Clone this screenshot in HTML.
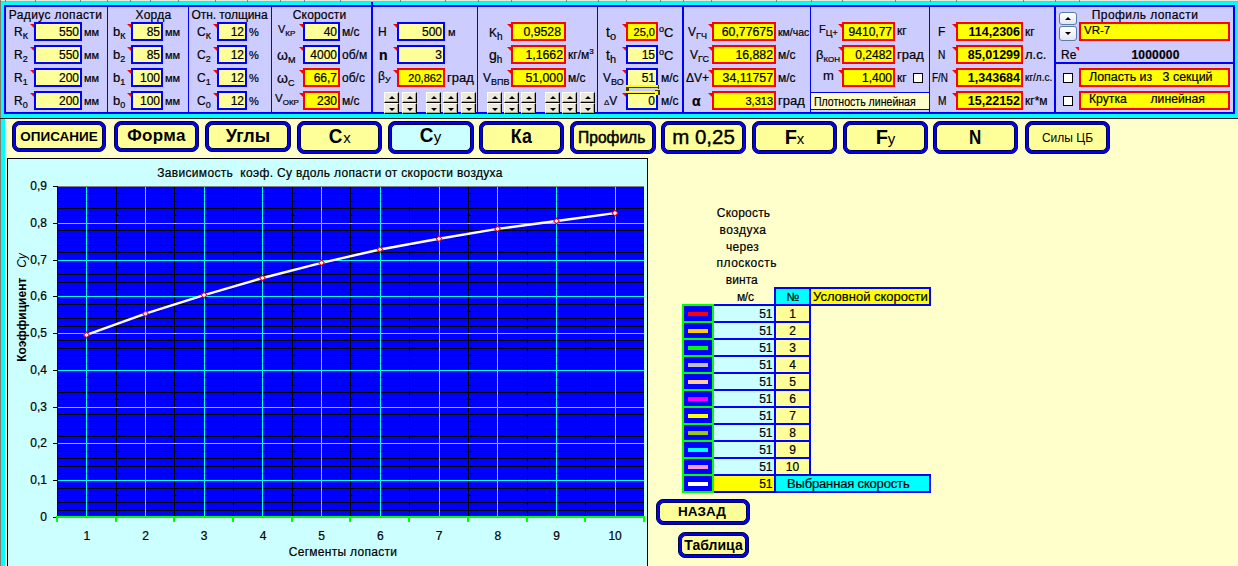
<!DOCTYPE html><html lang="ru"><head><meta charset="utf-8"><title>Cy</title><style>
html,body{margin:0;padding:0;}
body{width:1238px;height:566px;overflow:hidden;background:#FFFFCC;font-family:"Liberation Sans",Arial,sans-serif;font-size:12px;color:#000;position:relative;-webkit-text-stroke:0.2px #000;}
.a{position:absolute;white-space:nowrap;}
svg text{stroke:#000;stroke-width:0.2px;}
svg text.nb{stroke:none;}
.bx{position:absolute;box-sizing:border-box;border:2px solid #0000FF;background:#FFFF99;text-align:right;white-space:nowrap;overflow:hidden;}
.bx.r{border-color:#FF0000;background:#FFFF00;}
.t{position:absolute;white-space:nowrap;line-height:14px;height:14px;}
.tri{position:absolute;width:0;height:0;border-top:4px solid #FF0000;border-left:4px solid transparent;}
sub{font-size:9px;vertical-align:baseline;position:relative;top:3px;line-height:0;}
sup{font-size:8px;vertical-align:baseline;position:relative;top:-5px;line-height:0;}
.sp{position:absolute;box-sizing:border-box;width:15px;height:11px;background:#ECE9D8;border:1px solid;border-color:#FFFFFF #000 #000 #FFFFFF;box-shadow:inset -1px -1px 0 #ACA899;}
.sp i{position:absolute;left:4px;top:3px;width:6px;height:3px;background:#000;}
.sp.d i{top:4px;}
.sp.u i{clip-path:polygon(50% 0,100% 100%,0 100%);}
.sp.d i{clip-path:polygon(0 0,100% 0,50% 100%);}
.cb{position:absolute;box-sizing:border-box;width:10px;height:10px;background:#fff;border:1px solid #000;}
.btn{position:absolute;box-sizing:border-box;border:1px solid #00003C;border-radius:7px;background:#0000F0;}
.btn b{-webkit-text-stroke:0;position:absolute;left:2px;top:2px;right:2px;bottom:2px;border:1px solid #000050;border-radius:5px;background:#FFFF99;display:block;text-align:center;font-weight:bold;white-space:nowrap;overflow:hidden;}
</style></head><body>
<div class="a" style="left:0px;top:0px;width:1238px;height:2px;background:#ECE9D8;"></div>
<div class="a" style="left:0px;top:1px;width:1238px;height:1px;background:#B0A890;"></div>
<div class="a" style="left:5px;top:0px;width:1px;height:2px;background:#808080;"></div>
<div class="a" style="left:35px;top:0px;width:1px;height:2px;background:#808080;"></div>
<div class="a" style="left:80px;top:0px;width:1px;height:2px;background:#808080;"></div>
<div class="a" style="left:107px;top:0px;width:1px;height:2px;background:#808080;"></div>
<div class="a" style="left:130px;top:0px;width:1px;height:2px;background:#808080;"></div>
<div class="a" style="left:150px;top:0px;width:1px;height:2px;background:#808080;"></div>
<div class="a" style="left:178px;top:0px;width:1px;height:2px;background:#808080;"></div>
<div class="a" style="left:215px;top:0px;width:1px;height:2px;background:#808080;"></div>
<div class="a" style="left:247px;top:0px;width:1px;height:2px;background:#808080;"></div>
<div class="a" style="left:280px;top:0px;width:1px;height:2px;background:#808080;"></div>
<div class="a" style="left:304px;top:0px;width:1px;height:2px;background:#808080;"></div>
<div class="a" style="left:340px;top:0px;width:1px;height:2px;background:#808080;"></div>
<div class="a" style="left:400px;top:0px;width:1px;height:2px;background:#808080;"></div>
<div class="a" style="left:445px;top:0px;width:1px;height:2px;background:#808080;"></div>
<div class="a" style="left:478px;top:0px;width:1px;height:2px;background:#808080;"></div>
<div class="a" style="left:511px;top:0px;width:1px;height:2px;background:#808080;"></div>
<div class="a" style="left:566px;top:0px;width:1px;height:2px;background:#808080;"></div>
<div class="a" style="left:598px;top:0px;width:1px;height:2px;background:#808080;"></div>
<div class="a" style="left:626px;top:0px;width:1px;height:2px;background:#808080;"></div>
<div class="a" style="left:660px;top:0px;width:1px;height:2px;background:#808080;"></div>
<div class="a" style="left:683px;top:0px;width:1px;height:2px;background:#808080;"></div>
<div class="a" style="left:711px;top:0px;width:1px;height:2px;background:#808080;"></div>
<div class="a" style="left:776px;top:0px;width:1px;height:2px;background:#808080;"></div>
<div class="a" style="left:811px;top:0px;width:1px;height:2px;background:#808080;"></div>
<div class="a" style="left:842px;top:0px;width:1px;height:2px;background:#808080;"></div>
<div class="a" style="left:895px;top:0px;width:1px;height:2px;background:#808080;"></div>
<div class="a" style="left:930px;top:0px;width:1px;height:2px;background:#808080;"></div>
<div class="a" style="left:956px;top:0px;width:1px;height:2px;background:#808080;"></div>
<div class="a" style="left:1023px;top:0px;width:1px;height:2px;background:#808080;"></div>
<div class="a" style="left:1055px;top:0px;width:1px;height:2px;background:#808080;"></div>
<div class="a" style="left:1079px;top:0px;width:1px;height:2px;background:#808080;"></div>
<div class="a" style="left:0px;top:2px;width:1238px;height:116px;background:#00FFFF;"></div>
<div class="a" style="left:0px;top:0px;width:1px;height:566px;background:#808070;"></div>
<div class="a" style="left:1px;top:118px;width:4px;height:448px;background:#00FFFF;"></div>
<div class="a" style="left:0px;top:118px;width:1238px;height:1px;background:#202020;"></div>
<div class="a" style="left:4px;top:5px;width:1231px;height:109px;background:#0000FF;"></div>
<div class="a" style="left:6px;top:7px;width:1227px;height:105px;background:#CCCCFF;"></div>
<div class="a" style="left:107px;top:7px;width:1px;height:105px;background:#0000FF;"></div>
<div class="a" style="left:188px;top:7px;width:1px;height:105px;background:#0000FF;"></div>
<div class="a" style="left:271px;top:7px;width:1px;height:105px;background:#0000FF;"></div>
<div class="a" style="left:477px;top:7px;width:1px;height:105px;background:#0000FF;"></div>
<div class="a" style="left:597px;top:7px;width:1px;height:105px;background:#0000FF;"></div>
<div class="a" style="left:810px;top:7px;width:1px;height:105px;background:#0000FF;"></div>
<div class="a" style="left:929px;top:7px;width:1px;height:105px;background:#0000FF;"></div>
<div class="a" style="left:371px;top:2px;width:2px;height:110px;background:#0000FF;"></div>
<div class="a" style="left:682px;top:7px;width:2px;height:105px;background:#0000FF;"></div>
<div class="a" style="left:1054px;top:7px;width:2px;height:105px;background:#0000FF;"></div>
<div class="a" style="left:1056px;top:62px;width:177px;height:2px;background:#0000FF;"></div>
<div class="t" style="left:8.8px;top:8px;font-size:12px;letter-spacing:0.367px;">Радиус лопасти</div>
<div class="t" style="left:14px;top:25px;font-size:12px;">R<sub>К</sub></div>
<div class="bx" style="left:34px;top:22px;width:48px;height:19px;line-height:16px;font-size:12px;padding-right:1px;">550</div>
<div class="tri" style="left:30px;top:24px;"></div>
<div class="t" style="left:84px;top:25px;font-size:11px;">мм</div>
<div class="t" style="left:14px;top:48px;font-size:12px;">R<sub>2</sub></div>
<div class="bx" style="left:34px;top:45px;width:48px;height:19px;line-height:16px;font-size:12px;padding-right:1px;">550</div>
<div class="tri" style="left:30px;top:47px;"></div>
<div class="t" style="left:84px;top:48px;font-size:11px;">мм</div>
<div class="t" style="left:14px;top:71px;font-size:12px;">R<sub>1</sub></div>
<div class="bx" style="left:34px;top:68px;width:48px;height:19px;line-height:16px;font-size:12px;padding-right:1px;">200</div>
<div class="tri" style="left:30px;top:70px;"></div>
<div class="t" style="left:84px;top:71px;font-size:11px;">мм</div>
<div class="t" style="left:14px;top:94px;font-size:12px;">R<sub>0</sub></div>
<div class="bx" style="left:34px;top:91px;width:48px;height:19px;line-height:16px;font-size:12px;padding-right:1px;">200</div>
<div class="tri" style="left:30px;top:93px;"></div>
<div class="t" style="left:84px;top:94px;font-size:11px;">мм</div>
<div class="t" style="left:135.5px;top:8px;font-size:12px;letter-spacing:0.276px;">Хорда</div>
<div class="t" style="left:113px;top:25px;font-size:13px;">b<sub>К</sub></div>
<div class="bx" style="left:131px;top:22px;width:32px;height:19px;line-height:16px;font-size:12px;padding-right:1px;">85</div>
<div class="tri" style="left:127px;top:24px;"></div>
<div class="t" style="left:165px;top:25px;font-size:11px;">мм</div>
<div class="t" style="left:113px;top:48px;font-size:13px;">b<sub>2</sub></div>
<div class="bx" style="left:131px;top:45px;width:32px;height:19px;line-height:16px;font-size:12px;padding-right:1px;">85</div>
<div class="tri" style="left:127px;top:47px;"></div>
<div class="t" style="left:165px;top:48px;font-size:11px;">мм</div>
<div class="t" style="left:113px;top:71px;font-size:13px;">b<sub>1</sub></div>
<div class="bx" style="left:131px;top:68px;width:32px;height:19px;line-height:16px;font-size:12px;padding-right:1px;">100</div>
<div class="tri" style="left:127px;top:70px;"></div>
<div class="t" style="left:165px;top:71px;font-size:11px;">мм</div>
<div class="t" style="left:113px;top:94px;font-size:13px;">b<sub>0</sub></div>
<div class="bx" style="left:131px;top:91px;width:32px;height:19px;line-height:16px;font-size:12px;padding-right:1px;">100</div>
<div class="tri" style="left:127px;top:93px;"></div>
<div class="t" style="left:165px;top:94px;font-size:11px;">мм</div>
<div class="t" style="left:191.5px;top:8px;font-size:12px;letter-spacing:-0.065px;">Отн. толщина</div>
<div class="t" style="left:197px;top:25px;font-size:12px;">C<sub>К</sub></div>
<div class="bx" style="left:217px;top:22px;width:30px;height:19px;line-height:16px;font-size:12px;padding-right:1px;">12</div>
<div class="tri" style="left:213px;top:24px;"></div>
<div class="t" style="left:249px;top:25px;font-size:11px;">%</div>
<div class="t" style="left:197px;top:48px;font-size:12px;">C<sub>2</sub></div>
<div class="bx" style="left:217px;top:45px;width:30px;height:19px;line-height:16px;font-size:12px;padding-right:1px;">12</div>
<div class="tri" style="left:213px;top:47px;"></div>
<div class="t" style="left:249px;top:48px;font-size:11px;">%</div>
<div class="t" style="left:197px;top:71px;font-size:12px;">C<sub>1</sub></div>
<div class="bx" style="left:217px;top:68px;width:30px;height:19px;line-height:16px;font-size:12px;padding-right:1px;">12</div>
<div class="tri" style="left:213px;top:70px;"></div>
<div class="t" style="left:249px;top:71px;font-size:11px;">%</div>
<div class="t" style="left:197px;top:94px;font-size:12px;">C<sub>0</sub></div>
<div class="bx" style="left:217px;top:91px;width:30px;height:19px;line-height:16px;font-size:12px;padding-right:1px;">12</div>
<div class="tri" style="left:213px;top:93px;"></div>
<div class="t" style="left:249px;top:94px;font-size:11px;">%</div>
<div class="t" style="left:292.8px;top:8px;font-size:12px;letter-spacing:0.153px;">Скорости</div>
<div class="t" style="left:278px;top:22px;font-size:11px;">V<sub style="font-size:8px">КР</sub></div>
<div class="t" style="left:277px;top:48px;font-size:14px;">ω<sub>М</sub></div>
<div class="t" style="left:277px;top:71px;font-size:14px;">ω<sub>С</sub></div>
<div class="t" style="left:275px;top:91px;font-size:11.5px;">V<sub style="font-size:8px">ОКР</sub></div>
<div class="bx" style="left:303px;top:22px;width:37px;height:19px;line-height:16px;font-size:12px;padding-right:1px;">40</div>
<div class="tri" style="left:299px;top:24px;"></div>
<div class="bx" style="left:303px;top:45px;width:37px;height:19px;line-height:16px;font-size:12px;padding-right:1px;">4000</div>
<div class="tri" style="left:299px;top:47px;"></div>
<div class="bx r" style="left:303px;top:68px;width:37px;height:19px;line-height:16px;font-size:12px;padding-right:1px;">66,7</div>
<div class="tri" style="left:299px;top:70px;"></div>
<div class="bx r" style="left:303px;top:91px;width:37px;height:19px;line-height:16px;font-size:12px;padding-right:1px;">230</div>
<div class="tri" style="left:299px;top:93px;"></div>
<div class="t" style="left:342px;top:25px;font-size:12px;">м/с</div>
<div class="t" style="left:342px;top:48px;font-size:12px;">об/м</div>
<div class="t" style="left:342px;top:71px;font-size:12px;">об/с</div>
<div class="t" style="left:342px;top:94px;font-size:12px;">м/с</div>
<div class="t" style="left:378px;top:25px;font-size:12px;">H</div>
<div class="t" style="left:379px;top:48px;font-size:14px;font-weight:bold;">n</div>
<div class="t" style="left:378px;top:69px;font-size:12px;">β<sub>У</sub></div>
<div class="bx" style="left:397px;top:22px;width:48px;height:19px;line-height:16px;font-size:12px;padding-right:1px;">500</div>
<div class="tri" style="left:393px;top:24px;"></div>
<div class="bx" style="left:397px;top:45px;width:48px;height:19px;line-height:16px;font-size:12px;padding-right:1px;">3</div>
<div class="tri" style="left:393px;top:47px;"></div>
<div class="bx r" style="left:397px;top:68px;width:48px;height:19px;line-height:16px;font-size:11px;padding-right:1px;">20,862</div>
<div class="tri" style="left:393px;top:70px;"></div>
<div class="t" style="left:448px;top:25px;font-size:11px;">м</div>
<div class="t" style="left:447px;top:71px;font-size:13px;">град</div>
<div class="sp u" style="left:384px;top:92px;"><i></i></div><div class="sp d" style="left:384px;top:103px;"><i></i></div>
<div class="sp u" style="left:402px;top:92px;"><i></i></div><div class="sp d" style="left:402px;top:103px;"><i></i></div>
<div class="sp u" style="left:426px;top:92px;"><i></i></div><div class="sp d" style="left:426px;top:103px;"><i></i></div>
<div class="sp u" style="left:443px;top:92px;"><i></i></div><div class="sp d" style="left:443px;top:103px;"><i></i></div>
<div class="sp u" style="left:461px;top:92px;"><i></i></div><div class="sp d" style="left:461px;top:103px;"><i></i></div>
<div class="sp u" style="left:487px;top:92px;"><i></i></div><div class="sp d" style="left:487px;top:103px;"><i></i></div>
<div class="sp u" style="left:504px;top:92px;"><i></i></div><div class="sp d" style="left:504px;top:103px;"><i></i></div>
<div class="sp u" style="left:521px;top:92px;"><i></i></div><div class="sp d" style="left:521px;top:103px;"><i></i></div>
<div class="sp u" style="left:545px;top:92px;"><i></i></div><div class="sp d" style="left:545px;top:103px;"><i></i></div>
<div class="sp u" style="left:562px;top:92px;"><i></i></div><div class="sp d" style="left:562px;top:103px;"><i></i></div>
<div class="sp u" style="left:580px;top:92px;"><i></i></div><div class="sp d" style="left:580px;top:103px;"><i></i></div>
<div class="t" style="left:489px;top:26px;font-size:12px;">K<sub style="font-size:10px">h</sub></div>
<div class="t" style="left:489px;top:48px;font-size:14px;">g<sub style="font-size:10px">h</sub></div>
<div class="t" style="left:483px;top:71px;font-size:12px;">V<sub>ВПВ</sub></div>
<div class="bx r" style="left:511px;top:22px;width:55px;height:19px;line-height:16px;font-size:12.3px;padding-right:3px;">0,9528</div>
<div class="tri" style="left:507px;top:24px;"></div>
<div class="bx r" style="left:511px;top:45px;width:55px;height:19px;line-height:16px;font-size:12.3px;padding-right:1px;">1,1662</div>
<div class="tri" style="left:507px;top:47px;"></div>
<div class="bx r" style="left:511px;top:68px;width:55px;height:19px;line-height:16px;font-size:12.3px;padding-right:1px;">51,000</div>
<div class="tri" style="left:507px;top:70px;"></div>
<div class="t" style="left:568px;top:48px;font-size:12px;">кг/м<sup>3</sup></div>
<div class="t" style="left:568px;top:71px;font-size:12px;">м/с</div>
<div class="t" style="left:606px;top:25px;font-size:14px;">t<sub style="font-size:11px">o</sub></div>
<div class="t" style="left:606px;top:48px;font-size:14px;">t<sub style="font-size:11px">h</sub></div>
<div class="t" style="left:603px;top:71px;font-size:12px;">V<sub>ВО</sub></div>
<div class="t" style="left:604px;top:94px;font-size:12px;"><span style="font-size:8px">Δ</span>V</div>
<div class="bx r" style="left:626px;top:22px;width:32px;height:19px;line-height:16px;font-size:11px;padding-right:1px;">25,0</div>
<div class="tri" style="left:622px;top:24px;"></div>
<div class="bx" style="left:626px;top:45px;width:32px;height:19px;line-height:16px;font-size:12px;padding-right:1px;">15</div>
<div class="tri" style="left:622px;top:47px;"></div>
<div class="bx" style="left:626px;top:68px;width:32px;height:19px;line-height:16px;font-size:12px;padding-right:1px;">51</div>
<div class="tri" style="left:622px;top:70px;"></div>
<div class="bx" style="left:626px;top:91px;width:32px;height:19px;line-height:16px;font-size:12px;padding-right:1px;">0</div>
<div class="tri" style="left:622px;top:93px;"></div>
<div class="t" style="left:659px;top:26px;font-size:13px;"><sup style="font-size:9px;top:-5px">o</sup>C</div>
<div class="t" style="left:659px;top:49px;font-size:13px;"><sup style="font-size:9px;top:-5px">o</sup>C</div>
<div class="t" style="left:661px;top:71px;font-size:12px;">м/с</div>
<div class="t" style="left:661px;top:94px;font-size:12px;">м/с</div>
<div class="a" style="left:626px;top:85px;width:32px;height:2px;background:#FFFF00;"></div>
<div class="a" style="left:658px;top:85px;width:1px;height:4px;background:#3C3C00;"></div>
<div class="a" style="left:628px;top:87px;width:31px;height:1px;background:#3C3C00;"></div>
<div class="a" style="left:626px;top:87px;width:3px;height:4px;background:#3C3C00;"></div>
<div class="a" style="left:626px;top:91px;width:29px;height:2px;background:#FFFF00;"></div>
<div class="a" style="left:628px;top:93px;width:27px;height:1px;background:#000080;"></div>
<div class="a" style="left:655px;top:90px;width:5px;height:5px;background:#3C3C00;"></div>
<div class="a" style="left:655px;top:91px;width:3px;height:4px;background:#FFFF00;"></div>
<div class="t" style="left:688px;top:25px;font-size:12px;">V<sub>ГЧ</sub></div>
<div class="t" style="left:690px;top:48px;font-size:12px;">V<sub>ГС</sub></div>
<div class="t" style="left:686px;top:71px;font-size:12px;">ΔV+</div>
<div class="t" style="left:692px;top:94px;font-size:14px;font-weight:bold;">α</div>
<div class="bx r" style="left:712px;top:22px;width:64px;height:19px;line-height:16px;font-size:12.3px;padding-right:1px;">60,77675</div>
<div class="tri" style="left:708px;top:24px;"></div>
<div class="bx r" style="left:712px;top:45px;width:64px;height:19px;line-height:16px;font-size:12.3px;padding-right:1px;">16,882</div>
<div class="tri" style="left:708px;top:47px;"></div>
<div class="bx r" style="left:712px;top:68px;width:64px;height:19px;line-height:16px;font-size:12.3px;padding-right:1px;">34,11757</div>
<div class="tri" style="left:708px;top:70px;"></div>
<div class="bx r" style="left:712px;top:91px;width:64px;height:19px;line-height:16px;font-size:11px;padding-right:1px;">3,313</div>
<div class="tri" style="left:708px;top:93px;"></div>
<div class="t" style="left:778px;top:25px;font-size:10.5px;">км/час</div>
<div class="t" style="left:778px;top:48px;font-size:12px;">м/с</div>
<div class="t" style="left:778px;top:71px;font-size:12px;">м/с</div>
<div class="t" style="left:778px;top:94px;font-size:13px;">град</div>
<div class="t" style="left:819px;top:22px;font-size:11px;">F<sub>Ц+</sub></div>
<div class="t" style="left:816px;top:48px;font-size:13px;">β<sub style="font-size:8px">КОН</sub></div>
<div class="t" style="left:823px;top:69px;font-size:13px;">m</div>
<div class="bx r" style="left:842px;top:22px;width:53px;height:19px;line-height:16px;font-size:12px;padding-right:1px;">9410,77</div>
<div class="tri" style="left:838px;top:24px;"></div>
<div class="bx r" style="left:842px;top:45px;width:53px;height:19px;line-height:16px;font-size:12px;padding-right:1px;">0,2482</div>
<div class="tri" style="left:838px;top:47px;"></div>
<div class="bx r" style="left:842px;top:68px;width:53px;height:19px;line-height:16px;font-size:12px;padding-right:1px;">1,400</div>
<div class="tri" style="left:838px;top:70px;"></div>
<div class="t" style="left:897px;top:24px;font-size:12px;">кг</div>
<div class="t" style="left:897px;top:48px;font-size:13px;">град</div>
<div class="t" style="left:897px;top:71px;font-size:12px;">кг</div>
<div class="cb" style="left:913px;top:73px;"></div>
<div class="a" style="left:810px;top:92px;width:120px;height:18px;background:#0000FF;"></div>
<div class="a" style="left:811px;top:93px;width:118px;height:16px;background:#FFFFCC;"></div>
<div class="t" style="left:813.5px;top:94.5px;font-size:12.5px;transform:scaleX(0.845);transform-origin:0 0;">Плотность линейная</div>
<div class="t" style="left:938px;top:25px;font-size:12px;">F</div>
<div class="t" style="left:938px;top:48px;font-size:12px;transform:scaleX(0.85);transform-origin:0 0;">N</div>
<div class="t" style="left:932px;top:71px;font-size:12px;transform:scaleX(0.82);transform-origin:0 0;">F/N</div>
<div class="t" style="left:938px;top:94px;font-size:12px;transform:scaleX(0.85);transform-origin:0 0;">M</div>
<div class="bx r" style="left:956px;top:22px;width:67px;height:19px;line-height:16px;font-size:12.5px;padding-right:1px;font-weight:bold;-webkit-text-stroke:0;">114,2306</div>
<div class="tri" style="left:952px;top:24px;"></div>
<div class="bx r" style="left:956px;top:45px;width:67px;height:19px;line-height:16px;font-size:12.5px;padding-right:1px;font-weight:bold;-webkit-text-stroke:0;">85,01299</div>
<div class="tri" style="left:952px;top:47px;"></div>
<div class="bx r" style="left:956px;top:68px;width:67px;height:19px;line-height:16px;font-size:12.5px;padding-right:1px;font-weight:bold;-webkit-text-stroke:0;">1,343684</div>
<div class="tri" style="left:952px;top:70px;"></div>
<div class="bx r" style="left:956px;top:91px;width:67px;height:19px;line-height:16px;font-size:12.5px;padding-right:1px;font-weight:bold;-webkit-text-stroke:0;">15,22152</div>
<div class="tri" style="left:952px;top:93px;"></div>
<div class="t" style="left:1025px;top:25px;font-size:12px;">кг</div>
<div class="t" style="left:1025px;top:48px;font-size:13px;">л.с.</div>
<div class="t" style="left:1025px;top:71px;font-size:10px;">кг/л.с.</div>
<div class="t" style="left:1025px;top:94px;font-size:12px;">кг*м</div>
<div class="t" style="left:1091.8px;top:8px;font-size:12px;letter-spacing:0.412px;">Профиль лопасти</div>
<div class="a" style="left:1059px;top:12px;width:18px;height:13px;box-sizing:border-box;border:1px solid #5A7CA8;border-radius:3px;background:linear-gradient(#FFFFFF,#E3E6F0);"><i style="position:absolute;left:5px;top:4px;width:6px;height:3px;background:#000;clip-path:polygon(50% 0,100% 100%,0 100%);"></i></div>
<div class="a" style="left:1059px;top:26px;width:18px;height:15px;box-sizing:border-box;border:1px solid #5A7CA8;border-radius:3px;background:linear-gradient(#FFFFFF,#E3E6F0);"><i style="position:absolute;left:5px;top:5px;width:6px;height:3px;background:#000;clip-path:polygon(0 0,100% 0,50% 100%);"></i></div>
<div class="bx r" style="left:1079px;top:22px;width:151px;height:19px;line-height:13px;font-size:11.5px;text-align:left;padding-left:3px;">VR-7</div>
<div class="t" style="left:1061px;top:48px;font-size:12px;">Re</div>
<div class="tri" style="left:1075px;top:47px;"></div>
<div class="t" style="left:1131.5px;top:48px;font-size:12px;letter-spacing:0.183px;font-weight:bold;">1000000</div>
<div class="cb" style="left:1063px;top:73px;"></div><div class="cb" style="left:1063px;top:96px;"></div>
<div class="bx r" style="left:1079px;top:68px;width:151px;height:19px;line-height:15px;font-size:12.45px;text-align:left;padding-left:8px;">Лопасть из &nbsp; 3 секций</div>
<div class="bx r" style="left:1079px;top:91px;width:151px;height:19px;line-height:13.5px;font-size:12.2px;text-align:left;padding-left:8px;">Крутка &nbsp; &nbsp; &nbsp; линейная</div>
<div class="btn" style="left:12px;top:121px;width:94px;height:31px;"><b style="background:#FFFF99;font-size:13.5px;line-height:23px;">ОПИСАНИЕ</b></div>
<div class="btn" style="left:114px;top:121px;width:85px;height:31px;"><b style="background:#FFFF99;font-size:17px;line-height:22.0px;letter-spacing:0.3px;">Форма</b></div>
<div class="btn" style="left:205px;top:121px;width:86px;height:31px;"><b style="background:#FFFF99;font-size:18px;line-height:23px;">Углы</b></div>
<div class="btn" style="left:297px;top:121px;width:85px;height:33px;"><b style="background:#FFFF99;font-size:21px;line-height:22.0px;"><span style="display:inline-block;transform:scaleX(0.9);">C</span><span style="font-size:15px;font-weight:normal">x</span></b></div>
<div class="btn" style="left:388px;top:121px;width:86px;height:33px;"><b style="background:#CCFFFF;font-size:21px;line-height:20.0px;padding-right:2px;"><span style="display:inline-block;transform:scaleX(0.9);">C</span><span style="font-size:15px;font-weight:normal">у</span></b></div>
<div class="btn" style="left:479px;top:121px;width:85px;height:33px;"><b style="background:#FFFF99;font-size:21px;line-height:22.4px;"><span style="display:inline-block;transform:scaleX(0.85);">Ка</span></b></div>
<div class="btn" style="left:570px;top:121px;width:86px;height:33px;"><b style="background:#FFFF99;font-size:17px;line-height:26.0px;font-weight:normal;-webkit-text-stroke:0.55px #000;padding-right:3px;"><span style="display:inline-block;transform:scaleX(0.915);">Профиль</span></b></div>
<div class="btn" style="left:661px;top:121px;width:85px;height:33px;"><b style="background:#FFFF99;font-size:20.5px;line-height:23px;font-weight:normal;-webkit-text-stroke:0.4px #000;">m 0,25</b></div>
<div class="btn" style="left:752px;top:121px;width:85px;height:33px;"><b style="background:#FFFF99;font-size:20px;line-height:25px;">F<span style="font-size:15px;font-weight:normal">x</span></b></div>
<div class="btn" style="left:843px;top:121px;width:85px;height:33px;"><b style="background:#FFFF99;font-size:20px;line-height:25px;">F<span style="font-size:15px;font-weight:normal">y</span></b></div>
<div class="btn" style="left:933px;top:121px;width:85px;height:33px;"><b style="background:#FFFF99;font-size:20px;line-height:25px;"><span style="display:inline-block;transform:scaleX(0.85);">N</span></b></div>
<div class="btn" style="left:1025px;top:121px;width:85px;height:33px;"><b style="background:#FFFF99;font-size:12px;line-height:27px;font-weight:normal;">Силы ЦБ</b></div>
<div class="btn" style="left:656px;top:499px;width:94px;height:26px;"><b style="background:#FFFF99;font-size:13.5px;line-height:18px;padding-right:2px;">НАЗАД</b></div>
<div class="btn" style="left:678px;top:532px;width:71px;height:26px;"><b style="background:#FFFF99;font-size:14px;line-height:19.0px;">Таблица</b></div>
<div class="a" style="left:7px;top:158px;width:641px;height:408px;background:#000000;"></div>
<div class="a" style="left:8px;top:159px;width:639px;height:407px;background:#CCFFFF;"></div>
<svg class="a" style="left:0;top:150px;" width="660" height="416" viewBox="0 150 660 416" font-family='"Liberation Sans", Arial, sans-serif' font-size="12"><g shape-rendering="crispEdges"><rect x="58" y="186" width="586" height="330" fill="#0000FF"/><rect x="58" y="186" width="586" height="1" fill="#808080"/><rect x="58" y="193" width="586" height="1" fill="#000"/><rect x="58" y="201" width="586" height="1" fill="#000"/><rect x="58" y="208" width="586" height="1" fill="#000"/><rect x="58" y="215" width="586" height="1" fill="#000"/><rect x="58" y="230" width="586" height="1" fill="#000"/><rect x="58" y="237" width="586" height="1" fill="#000"/><rect x="58" y="245" width="586" height="1" fill="#000"/><rect x="58" y="252" width="586" height="1" fill="#000"/><rect x="58" y="267" width="586" height="1" fill="#000"/><rect x="58" y="274" width="586" height="1" fill="#000"/><rect x="58" y="282" width="586" height="1" fill="#000"/><rect x="58" y="289" width="586" height="1" fill="#000"/><rect x="58" y="304" width="586" height="1" fill="#000"/><rect x="58" y="311" width="586" height="1" fill="#000"/><rect x="58" y="318" width="586" height="1" fill="#000"/><rect x="58" y="326" width="586" height="1" fill="#000"/><rect x="58" y="340" width="586" height="1" fill="#000"/><rect x="58" y="348" width="586" height="1" fill="#000"/><rect x="58" y="355" width="586" height="1" fill="#000"/><rect x="58" y="363" width="586" height="1" fill="#000"/><rect x="58" y="377" width="586" height="1" fill="#000"/><rect x="58" y="385" width="586" height="1" fill="#000"/><rect x="58" y="392" width="586" height="1" fill="#000"/><rect x="58" y="399" width="586" height="1" fill="#000"/><rect x="58" y="414" width="586" height="1" fill="#000"/><rect x="58" y="421" width="586" height="1" fill="#000"/><rect x="58" y="429" width="586" height="1" fill="#000"/><rect x="58" y="436" width="586" height="1" fill="#000"/><rect x="58" y="451" width="586" height="1" fill="#000"/><rect x="58" y="458" width="586" height="1" fill="#000"/><rect x="58" y="466" width="586" height="1" fill="#000"/><rect x="58" y="473" width="586" height="1" fill="#000"/><rect x="58" y="488" width="586" height="1" fill="#000"/><rect x="58" y="495" width="586" height="1" fill="#000"/><rect x="58" y="502" width="586" height="1" fill="#000"/><rect x="58" y="510" width="586" height="1" fill="#000"/><rect x="116" y="187" width="1" height="329" fill="#000"/><rect x="174" y="187" width="1" height="329" fill="#000"/><rect x="233" y="187" width="1" height="329" fill="#000"/><rect x="292" y="187" width="1" height="329" fill="#000"/><rect x="350" y="187" width="1" height="329" fill="#000"/><rect x="409" y="187" width="1" height="329" fill="#000"/><rect x="468" y="187" width="1" height="329" fill="#000"/><rect x="527" y="187" width="1" height="329" fill="#000"/><rect x="585" y="187" width="1" height="329" fill="#000"/><rect x="58" y="223" width="586" height="1" fill="#00FFFF"/><rect x="58" y="260" width="586" height="1" fill="#00FFFF"/><rect x="58" y="296" width="586" height="1" fill="#00FFFF"/><rect x="58" y="333" width="586" height="1" fill="#00FFFF"/><rect x="58" y="370" width="586" height="1" fill="#00FFFF"/><rect x="58" y="407" width="586" height="1" fill="#00FFFF"/><rect x="58" y="443" width="586" height="1" fill="#00FFFF"/><rect x="58" y="480" width="586" height="1" fill="#00FFFF"/><rect x="86" y="187" width="1" height="329" fill="#00FFFF"/><rect x="145" y="187" width="1" height="329" fill="#00FFFF"/><rect x="204" y="187" width="1" height="329" fill="#00FFFF"/><rect x="262" y="187" width="1" height="329" fill="#00FFFF"/><rect x="321" y="187" width="1" height="329" fill="#00FFFF"/><rect x="380" y="187" width="1" height="329" fill="#00FFFF"/><rect x="439" y="187" width="1" height="329" fill="#00FFFF"/><rect x="497" y="187" width="1" height="329" fill="#00FFFF"/><rect x="556" y="187" width="1" height="329" fill="#00FFFF"/><rect x="615" y="187" width="1" height="329" fill="#00FFFF"/><rect x="57" y="186" width="1" height="331" fill="#000"/><rect x="53" y="517" width="4" height="1" fill="#000"/><rect x="53" y="480" width="4" height="1" fill="#000"/><rect x="53" y="443" width="4" height="1" fill="#000"/><rect x="53" y="407" width="4" height="1" fill="#000"/><rect x="53" y="370" width="4" height="1" fill="#000"/><rect x="53" y="333" width="4" height="1" fill="#000"/><rect x="53" y="296" width="4" height="1" fill="#000"/><rect x="53" y="260" width="4" height="1" fill="#000"/><rect x="53" y="223" width="4" height="1" fill="#000"/><rect x="53" y="186" width="4" height="1" fill="#000"/><rect x="56" y="516" width="588" height="2" fill="#00FF00"/><rect x="56" y="516" width="2" height="6" fill="#00FF00"/><rect x="115" y="516" width="2" height="6" fill="#00FF00"/><rect x="173" y="516" width="2" height="6" fill="#00FF00"/><rect x="232" y="516" width="2" height="6" fill="#00FF00"/><rect x="291" y="516" width="2" height="6" fill="#00FF00"/><rect x="349" y="516" width="2" height="6" fill="#00FF00"/><rect x="408" y="516" width="2" height="6" fill="#00FF00"/><rect x="467" y="516" width="2" height="6" fill="#00FF00"/><rect x="526" y="516" width="2" height="6" fill="#00FF00"/><rect x="584" y="516" width="2" height="6" fill="#00FF00"/><rect x="643" y="516" width="2" height="6" fill="#00FF00"/></g><text x="47" y="521" text-anchor="end">0</text><text x="47" y="484" text-anchor="end">0,1</text><text x="47" y="447" text-anchor="end">0,2</text><text x="47" y="411" text-anchor="end">0,3</text><text x="47" y="374" text-anchor="end">0,4</text><text x="47" y="337" text-anchor="end">0,5</text><text x="47" y="300" text-anchor="end">0,6</text><text x="47" y="264" text-anchor="end">0,7</text><text x="47" y="227" text-anchor="end">0,8</text><text x="47" y="190" text-anchor="end">0,9</text><text x="86.8" y="540" text-anchor="middle">1</text><text x="145.6" y="540" text-anchor="middle">2</text><text x="204.2" y="540" text-anchor="middle">3</text><text x="263.0" y="540" text-anchor="middle">4</text><text x="321.7" y="540" text-anchor="middle">5</text><text x="380.4" y="540" text-anchor="middle">6</text><text x="439.1" y="540" text-anchor="middle">7</text><text x="497.8" y="540" text-anchor="middle">8</text><text x="556.5" y="540" text-anchor="middle">9</text><text x="615.1" y="540" text-anchor="middle">10</text><polyline fill="none" stroke="#fff" stroke-width="2.4" points="86.5,334.9 145.5,313.7 204,295.1 262.5,278 321.5,262.8 380,249.5 439,238.8 497.5,228.9 556.5,221 615,213.1"/><rect x="84.5" y="332.9" width="4" height="4" transform="rotate(45 86.5 334.9)" fill="#fff" stroke="#FF0000" stroke-width="1"/><rect x="143.5" y="311.7" width="4" height="4" transform="rotate(45 145.5 313.7)" fill="#fff" stroke="#FF0000" stroke-width="1"/><rect x="202" y="293.1" width="4" height="4" transform="rotate(45 204 295.1)" fill="#fff" stroke="#FF0000" stroke-width="1"/><rect x="260.5" y="276" width="4" height="4" transform="rotate(45 262.5 278)" fill="#fff" stroke="#FF0000" stroke-width="1"/><rect x="319.5" y="260.8" width="4" height="4" transform="rotate(45 321.5 262.8)" fill="#fff" stroke="#FF0000" stroke-width="1"/><rect x="378" y="247.5" width="4" height="4" transform="rotate(45 380 249.5)" fill="#fff" stroke="#FF0000" stroke-width="1"/><rect x="437" y="236.8" width="4" height="4" transform="rotate(45 439 238.8)" fill="#fff" stroke="#FF0000" stroke-width="1"/><rect x="495.5" y="226.9" width="4" height="4" transform="rotate(45 497.5 228.9)" fill="#fff" stroke="#FF0000" stroke-width="1"/><rect x="554.5" y="219" width="4" height="4" transform="rotate(45 556.5 221)" fill="#fff" stroke="#FF0000" stroke-width="1"/><rect x="613" y="211.1" width="4" height="4" transform="rotate(45 615 213.1)" fill="#fff" stroke="#FF0000" stroke-width="1"/><text x="330" y="177" text-anchor="middle" xml:space="preserve" letter-spacing="0.313">Зависимость  коэф. Су вдоль лопасти от скорости воздуха</text><text x="343" y="555.5" text-anchor="middle" letter-spacing="0.287">Сегменты лопасти</text><text transform="translate(26,307.5) rotate(-90)" text-anchor="middle" font-weight="bold" font-size="12" class="nb" xml:space="preserve">Коэффициент   <tspan font-style="italic" font-weight="normal">Су</tspan></text></svg>
<div class="t" style="left:716.8px;top:206.0px;font-size:12px;letter-spacing:0.210px;">Скорость</div>
<div class="t" style="left:719.5px;top:222.8px;font-size:12px;letter-spacing:0.492px;">воздуха</div>
<div class="t" style="left:725.9px;top:239.6px;font-size:12px;letter-spacing:0.357px;">через</div>
<div class="t" style="left:716.6px;top:256.4px;font-size:12px;letter-spacing:0.465px;">плоскость</div>
<div class="t" style="left:725.8px;top:273.2px;font-size:12px;letter-spacing:0.052px;">винта</div>
<div class="t" style="left:736.9px;top:290.0px;font-size:12px;letter-spacing:-0.295px;">м/с</div>
<div class="a" style="left:774px;top:287px;width:157px;height:2px;background:#0000FF;"></div>
<div class="a" style="left:774px;top:287px;width:2px;height:19px;background:#0000FF;"></div>
<div class="a" style="left:776px;top:289px;width:33px;height:15px;background:#00FFFF;"></div>
<div class="a" style="left:809px;top:287px;width:2px;height:19px;background:#0000FF;"></div>
<div class="a" style="left:811px;top:289px;width:118px;height:15px;background:#FFFF00;"></div>
<div class="a" style="left:929px;top:287px;width:2px;height:19px;background:#0000FF;"></div>
<div class="a" style="left:811px;top:304px;width:120px;height:2px;background:#0000FF;"></div>
<div class="t" style="left:593px;width:400px;text-align:center;top:290px;font-size:12px;">№</div>
<div class="t" style="left:813px;top:290px;font-size:13px;">Условной скорости</div>
<div class="a" style="left:682px;top:304px;width:32px;height:189px;background:#00FF00;"></div>
<div class="a" style="left:714px;top:304px;width:97px;height:172px;background:#0000FF;"></div>
<div class="a" style="left:714px;top:474px;width:217px;height:19px;background:#0000FF;"></div>
<div class="a" style="left:684px;top:306px;width:28px;height:15px;background:#0000FF;"></div>
<div class="a" style="left:688px;top:312px;width:20px;height:4px;background:#FF0000;"></div>
<div class="a" style="left:714px;top:306px;width:60px;height:15px;background:#CCFFFF;"></div>
<div class="a" style="left:776px;top:306px;width:33px;height:15px;background:#FFFF99;"></div>
<div class="t" style="left:592.5px;width:400px;text-align:center;top:306.5px;font-size:12px;">1</div>
<div class="t" style="left:716px;width:56.5px;text-align:right;top:306.5px;font-size:12px;">51</div>
<div class="a" style="left:684px;top:323px;width:28px;height:15px;background:#0000FF;"></div>
<div class="a" style="left:688px;top:329px;width:20px;height:4px;background:#FFCC00;"></div>
<div class="a" style="left:714px;top:323px;width:60px;height:15px;background:#CCFFFF;"></div>
<div class="a" style="left:776px;top:323px;width:33px;height:15px;background:#FFFF99;"></div>
<div class="t" style="left:592.5px;width:400px;text-align:center;top:323.5px;font-size:12px;">2</div>
<div class="t" style="left:716px;width:56.5px;text-align:right;top:323.5px;font-size:12px;">51</div>
<div class="a" style="left:684px;top:340px;width:28px;height:15px;background:#0000FF;"></div>
<div class="a" style="left:688px;top:346px;width:20px;height:4px;background:#00FF00;"></div>
<div class="a" style="left:714px;top:340px;width:60px;height:15px;background:#CCFFFF;"></div>
<div class="a" style="left:776px;top:340px;width:33px;height:15px;background:#FFFF99;"></div>
<div class="t" style="left:592.5px;width:400px;text-align:center;top:340.5px;font-size:12px;">3</div>
<div class="t" style="left:716px;width:56.5px;text-align:right;top:340.5px;font-size:12px;">51</div>
<div class="a" style="left:684px;top:357px;width:28px;height:15px;background:#0000FF;"></div>
<div class="a" style="left:688px;top:363px;width:20px;height:4px;background:#C0C0C0;"></div>
<div class="a" style="left:714px;top:357px;width:60px;height:15px;background:#CCFFFF;"></div>
<div class="a" style="left:776px;top:357px;width:33px;height:15px;background:#FFFF99;"></div>
<div class="t" style="left:592.5px;width:400px;text-align:center;top:357.5px;font-size:12px;">4</div>
<div class="t" style="left:716px;width:56.5px;text-align:right;top:357.5px;font-size:12px;">51</div>
<div class="a" style="left:684px;top:374px;width:28px;height:15px;background:#0000FF;"></div>
<div class="a" style="left:688px;top:380px;width:20px;height:4px;background:#FFCC99;"></div>
<div class="a" style="left:714px;top:374px;width:60px;height:15px;background:#CCFFFF;"></div>
<div class="a" style="left:776px;top:374px;width:33px;height:15px;background:#FFFF99;"></div>
<div class="t" style="left:592.5px;width:400px;text-align:center;top:374.5px;font-size:12px;">5</div>
<div class="t" style="left:716px;width:56.5px;text-align:right;top:374.5px;font-size:12px;">51</div>
<div class="a" style="left:684px;top:391px;width:28px;height:15px;background:#0000FF;"></div>
<div class="a" style="left:688px;top:397px;width:20px;height:4px;background:#FF00FF;"></div>
<div class="a" style="left:714px;top:391px;width:60px;height:15px;background:#CCFFFF;"></div>
<div class="a" style="left:776px;top:391px;width:33px;height:15px;background:#FFFF99;"></div>
<div class="t" style="left:592.5px;width:400px;text-align:center;top:391.5px;font-size:12px;">6</div>
<div class="t" style="left:716px;width:56.5px;text-align:right;top:391.5px;font-size:12px;">51</div>
<div class="a" style="left:684px;top:408px;width:28px;height:15px;background:#0000FF;"></div>
<div class="a" style="left:688px;top:414px;width:20px;height:4px;background:#FFFF00;"></div>
<div class="a" style="left:714px;top:408px;width:60px;height:15px;background:#CCFFFF;"></div>
<div class="a" style="left:776px;top:408px;width:33px;height:15px;background:#FFFF99;"></div>
<div class="t" style="left:592.5px;width:400px;text-align:center;top:408.5px;font-size:12px;">7</div>
<div class="t" style="left:716px;width:56.5px;text-align:right;top:408.5px;font-size:12px;">51</div>
<div class="a" style="left:684px;top:425px;width:28px;height:15px;background:#0000FF;"></div>
<div class="a" style="left:688px;top:431px;width:20px;height:4px;background:#99CC00;"></div>
<div class="a" style="left:714px;top:425px;width:60px;height:15px;background:#CCFFFF;"></div>
<div class="a" style="left:776px;top:425px;width:33px;height:15px;background:#FFFF99;"></div>
<div class="t" style="left:592.5px;width:400px;text-align:center;top:425.5px;font-size:12px;">8</div>
<div class="t" style="left:716px;width:56.5px;text-align:right;top:425.5px;font-size:12px;">51</div>
<div class="a" style="left:684px;top:442px;width:28px;height:15px;background:#0000FF;"></div>
<div class="a" style="left:688px;top:448px;width:20px;height:4px;background:#00FFFF;"></div>
<div class="a" style="left:714px;top:442px;width:60px;height:15px;background:#CCFFFF;"></div>
<div class="a" style="left:776px;top:442px;width:33px;height:15px;background:#FFFF99;"></div>
<div class="t" style="left:592.5px;width:400px;text-align:center;top:442.5px;font-size:12px;">9</div>
<div class="t" style="left:716px;width:56.5px;text-align:right;top:442.5px;font-size:12px;">51</div>
<div class="a" style="left:684px;top:459px;width:28px;height:15px;background:#0000FF;"></div>
<div class="a" style="left:688px;top:465px;width:20px;height:4px;background:#FF99CC;"></div>
<div class="a" style="left:714px;top:459px;width:60px;height:15px;background:#CCFFFF;"></div>
<div class="a" style="left:776px;top:459px;width:33px;height:15px;background:#FFFF99;"></div>
<div class="t" style="left:592.5px;width:400px;text-align:center;top:459.5px;font-size:12px;">10</div>
<div class="t" style="left:716px;width:56.5px;text-align:right;top:459.5px;font-size:12px;">51</div>
<div class="a" style="left:684px;top:476px;width:28px;height:15px;background:#0000FF;"></div>
<div class="a" style="left:688px;top:482px;width:20px;height:4px;background:#FFFFFF;"></div>
<div class="a" style="left:714px;top:476px;width:60px;height:15px;background:#FFFF00;"></div>
<div class="a" style="left:776px;top:476px;width:153px;height:15px;background:#00FFFF;"></div>
<div class="t" style="left:787px;top:476.5px;font-size:13px;letter-spacing:-0.162px;">Выбранная скорость</div>
<div class="t" style="left:716px;width:56.5px;text-align:right;top:476.5px;font-size:12px;">51</div>
</body></html>
